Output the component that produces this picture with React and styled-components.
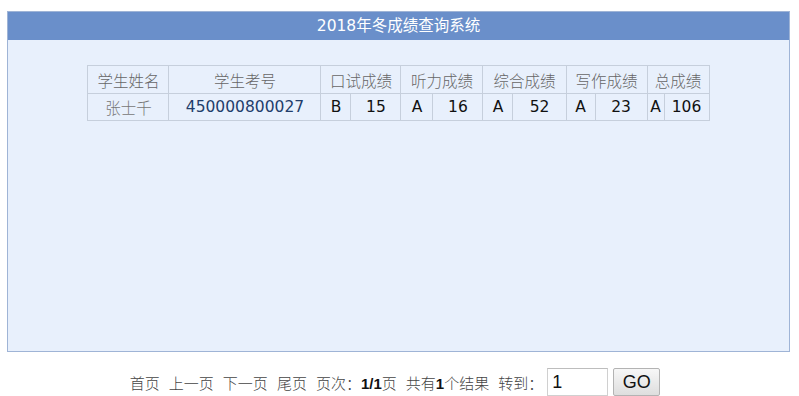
import React from 'react';
import styled, { createGlobalStyle } from 'styled-components';

const colors = {
  panelBorder: '#9fb4d6',
  panelBg: '#e8f0fc',
  titleBg: '#6a8fca',
  cellBorder: '#c6cfdc',
  headText: '#666666',
  number: '#223d6b',
  grade: '#111111',
  pagerText: '#444444'
};

const fonts = {
  cjk: '"Noto Sans CJK SC", sans-serif',
  latin: '"DejaVu Sans", "Noto Sans CJK SC", sans-serif',
  arial: '"Liberation Sans", "Noto Sans CJK SC", sans-serif'
};

const GlobalStyle = createGlobalStyle`
  html, body {
    margin: 0;
    padding: 0;
    background: #ffffff;
  }
  body {
    font-family: ${fonts.cjk};
  }
`;

const Page = styled.div`
  width: 799px;
  height: 396px;
  box-sizing: border-box;
  padding: 11px 9px 0 7px;
  overflow: hidden;
`;

const Panel = styled.section`
  height: 341px;
  box-sizing: border-box;
  border: 1px solid ${colors.panelBorder};
  background: ${colors.panelBg};
  display: flex;
  flex-direction: column;
`;

const PanelTitle = styled.h1`
  margin: 0;
  height: 28px;
  background: ${colors.titleBg};
  color: #ffffff;
  font-family: ${fonts.latin};
  font-size: 15.5px;
  font-weight: 400;
  line-height: 28px;
  text-align: center;
`;

const PanelBody = styled.div`
  display: flex;
  justify-content: center;
  padding-top: 25px;
`;

const ScoreTable = styled.table`
  width: 621px;
  table-layout: fixed;
  border-collapse: collapse;
  border: 1px solid ${colors.cellBorder};
`;

const Col = styled.col`
  width: ${({ w }) => w}px;
`;

const HeadCell = styled.th`
  height: 27px;
  padding: 0;
  border: 1px solid ${colors.cellBorder};
  color: ${colors.headText};
  font-family: ${fonts.cjk};
  font-size: 15.5px;
  font-weight: 300;
  text-align: center;
  white-space: nowrap;
`;

const Cell = styled.td`
  height: 26px;
  padding: 0;
  border: 1px solid ${colors.cellBorder};
  text-align: center;
  white-space: nowrap;
  font-family: ${({ cjk }) => (cjk ? fonts.cjk : fonts.latin)};
  font-size: 15.5px;
  font-weight: ${({ cjk }) => (cjk ? 300 : 400)};
  color: ${({ tone }) => tone || colors.grade};
`;

const Pager = styled.nav`
  display: flex;
  justify-content: center;
  align-items: center;
  margin-top: 16px;
  height: 28px;
  padding-right: 7px;
  font-family: ${fonts.cjk};
  font-size: 15px;
  font-weight: 300;
  color: ${colors.pagerText};
`;

const PagerLink = styled.span`
  margin-right: 9px;
  white-space: nowrap;
  cursor: pointer;
`;

const PagerInfo = styled.span`
  margin-right: ${({ last }) => (last ? '4px' : '9px')};
  white-space: nowrap;
`;

const Strong = styled.b`
  font-family: ${fonts.arial};
  font-weight: 700;
  color: #111111;
`;

const PageInput = styled.input`
  width: 61px;
  height: 28px;
  box-sizing: border-box;
  margin: 0 5px 0 0;
  padding: 0 4px;
  border: 1px solid #d0d0d0;
  border-top-color: #bdbdbd;
  background: #ffffff;
  font-family: ${fonts.arial};
  font-size: 18px;
  color: #111111;
  outline: none;
`;

const GoButton = styled.button`
  width: 47px;
  height: 28px;
  box-sizing: border-box;
  margin: 0;
  padding: 0;
  border: 1px solid #b3b3b3;
  border-radius: 2px;
  background: linear-gradient(#f7f7f7, #dedede);
  font-family: ${fonts.arial};
  font-size: 18px;
  color: #111111;
  cursor: pointer;
`;

const widths = [81, 152, 30, 50, 32, 50, 30, 53, 29, 52, 17, 45];

const subjects = [
  { title: '口试成绩', level: 'B', score: 15 },
  { title: '听力成绩', level: 'A', score: 16 },
  { title: '综合成绩', level: 'A', score: 52 },
  { title: '写作成绩', level: 'A', score: 23 },
  { title: '总成绩', level: 'A', score: 106 }
];

const student = { name: '张士千', number: '450000800027' };

const App = () => (
  <Page>
    <GlobalStyle />
    <Panel>
      <PanelTitle>2018年冬成绩查询系统</PanelTitle>
      <PanelBody>
        <ScoreTable>
          <colgroup>
            {widths.map((w, i) => <Col key={i} w={w} />)}
          </colgroup>
          <thead>
            <tr>
              <HeadCell>学生姓名</HeadCell>
              <HeadCell>学生考号</HeadCell>
              {subjects.map(s => <HeadCell key={s.title} colSpan={2}>{s.title}</HeadCell>)}
            </tr>
          </thead>
          <tbody>
            <tr>
              <Cell cjk tone="#777777">{student.name}</Cell>
              <Cell tone={colors.number}>{student.number}</Cell>
              {subjects.map(s => (
                <React.Fragment key={s.title}>
                  <Cell>{s.level}</Cell>
                  <Cell>{s.score}</Cell>
                </React.Fragment>
              ))}
            </tr>
          </tbody>
        </ScoreTable>
      </PanelBody>
    </Panel>
    <Pager>
      <PagerLink>首页</PagerLink>
      <PagerLink>上一页</PagerLink>
      <PagerLink>下一页</PagerLink>
      <PagerLink>尾页</PagerLink>
      <PagerInfo>页次：<Strong>1/1</Strong>页</PagerInfo>
      <PagerInfo>共有<Strong>1</Strong>个结果</PagerInfo>
      <PagerInfo last>转到：</PagerInfo>
      <PageInput defaultValue="1" />
      <GoButton type="button">GO</GoButton>
    </Pager>
  </Page>
);

export default App;
